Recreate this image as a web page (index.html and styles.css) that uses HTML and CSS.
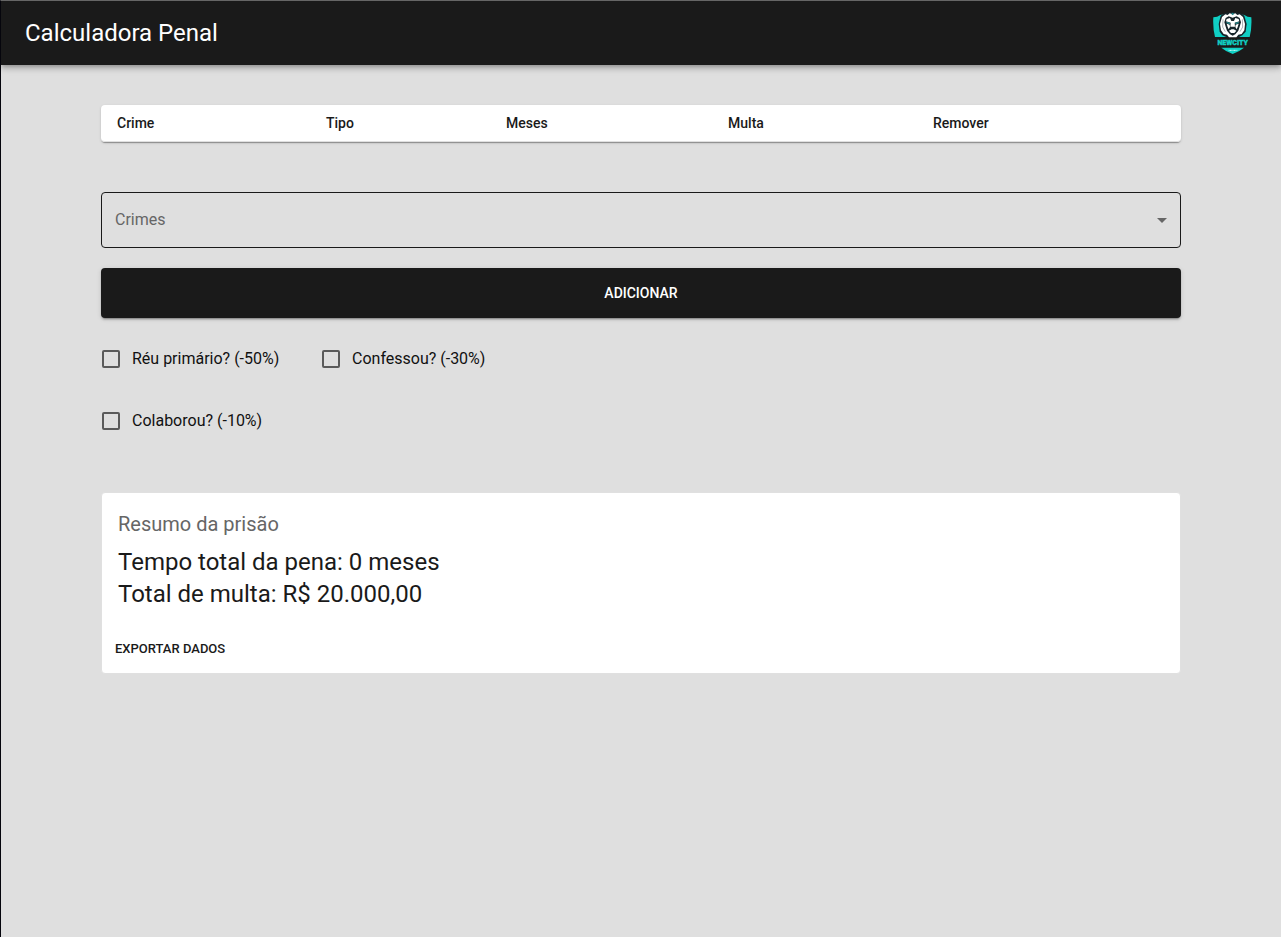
FILE: index.html
```html
<!DOCTYPE html>
<html lang="pt-BR">
<head>
<meta charset="utf-8">
<meta name="viewport" content="width=device-width, initial-scale=1">
<title>Calculadora Penal</title>
<link rel="stylesheet" href="styles.css">
</head>
<body>
<header class="app-bar">
  <h1 class="app-title">Calculadora Penal</h1>
  <svg class="logo" viewBox="0 0 120 126" role="img" aria-label="NewCity">
    <path fill="#10cfc4" d="M1 16Q13 16 22 9L59 2L94 9Q103 16 115 16Q117 48 110 75H6Q-1 48 1 16Z"/>
    <path fill="#10cfc4" d="M25 107H93Q80 118 59 126Q38 118 25 107Z"/>
    <path fill="#17242a" d="M23 11L36 3L59 0L82 3L94 11L101 36L98 59L88 70L78 75H40L28 70L20 59L17 36Z"/>
    <path fill="#fff" d="M27 15L37 7L44 9L50 4L59 7L67 4L73 9L80 7L90 15L96 36L94 55L86 66L76 68L70 76H48L42 68L32 66L24 55L21 36Z"/>
    <path fill="#17242a" d="M38 18L47 13L59 17L71 13L80 18L84 31L80 44L76 56L67 67L59 71L51 67L42 56L38 44L34 31Z"/>
    <path fill="#fff" d="M41 21L51 18L55 27H63L67 18L77 21L79 28L65 32L66 44H52L53 32L39 28ZM41 35L50 38L51 45L47 52L44 45ZM77 35L68 38L67 45L71 52L74 45ZM48 56L56 52H62L70 56L64 63H54Z"/>
    <path fill="#27868b" d="M40 29L52 32L50 37L41 34ZM78 29L66 32L68 37L77 34ZM54 5L59 2L64 5L59 10Z"/>
    <path fill="none" stroke="#7f898f" stroke-width="2" d="M30 22L29 45L37 59M88 22L89 45L81 59"/>
    <text class="logo-name" x="59" y="99" text-anchor="middle">NEWCITY</text>
    <path stroke="#d5fffb" stroke-width="3" stroke-dasharray="3 1" d="M47 115H73"/>
  </svg>
</header>

<main class="content">
  <table class="crime-table">
    <colgroup>
      <col class="col-crime"><col class="col-type"><col class="col-months"><col class="col-fine"><col class="col-remove">
    </colgroup>
    <thead>
      <tr>
        <th scope="col">Crime</th>
        <th scope="col">Tipo</th>
        <th scope="col">Meses</th>
        <th scope="col">Multa</th>
        <th scope="col">Remover</th>
      </tr>
    </thead>
  </table>

  <div class="crime-field">
    <select class="crime-select" aria-label="Crimes">
      <option value="">Crimes</option>
    </select>
    <svg class="crime-arrow" viewBox="0 0 24 24" aria-hidden="true"><path d="M7 10l5 5 5-5z"/></svg>
  </div>

  <button class="add-button" type="button">ADICIONAR</button>

  <div class="options">
    <label class="option"><input class="option-box" type="checkbox">Réu primário? (-50%)</label>
    <label class="option"><input class="option-box" type="checkbox">Confessou? (-30%)</label>
    <label class="option"><input class="option-box" type="checkbox">Colaborou? (-10%)</label>
  </div>

  <section class="summary">
    <div class="summary-body">
      <h2 class="summary-title">Resumo da prisão</h2>
      <p class="summary-line">Tempo total da pena: 0 meses</p>
      <p class="summary-line">Total de multa: R$ 20.000,00</p>
    </div>
    <div class="summary-actions">
      <button class="export-button" type="button">EXPORTAR DADOS</button>
    </div>
  </section>
</main>
</body>
</html>
```
FILE: styles.css
```css
* {
  box-sizing: border-box;
}

body {
  margin: 0;
  min-height: 100vh;
  border-top: 1px solid #666;
  border-left: 1px solid #05050c;
  background: #dfdfdf;
  color: #1a1a1a;
  font-family: Roboto, "Liberation Sans", sans-serif;
  font-size: 16px;
  line-height: 24px;
}

.app-bar {
  display: flex;
  align-items: center;
  justify-content: space-between;
  min-height: 64px;
  padding: 0 28px 0 24px;
  background: #1a1a1a;
  color: #fff;
  box-shadow: 0 2px 4px -1px rgba(0, 0, 0, 0.2), 0 4px 5px rgba(0, 0, 0, 0.14), 0 1px 10px rgba(0, 0, 0, 0.12);
}

.app-title {
  margin: 0;
  font-size: 24px;
  font-weight: 400;
  line-height: 32px;
}

.logo {
  width: 40px;
  height: 42px;
}

.logo-name {
  fill: #10cfc4;
  stroke: #10cfc4;
  stroke-width: 1;
  font-family: Roboto, sans-serif;
  font-size: 21px;
  font-weight: 900;
}

.content {
  display: flex;
  flex-direction: column;
  padding: 40px 100px;
}

.crime-table {
  width: 100%;
  margin-bottom: 50px;
  table-layout: fixed;
  border-spacing: 0;
  border-radius: 4px;
  background: #fff;
  box-shadow: 0 2px 1px -1px rgba(0, 0, 0, 0.2), 0 1px 1px rgba(0, 0, 0, 0.14), 0 1px 3px rgba(0, 0, 0, 0.12);
}

.crime-table th {
  padding: 6px 16px;
  border-bottom: 1px solid #e0e0e0;
  font-size: 14px;
  font-weight: 500;
  text-align: left;
}

.crime-table th:first-child {
  border-bottom-left-radius: 4px;
}

.crime-table th:last-child {
  border-bottom-right-radius: 4px;
}

.col-crime {
  width: 19.35%;
}

.col-type {
  width: 16.67%;
}

.col-months {
  width: 20.56%;
}

.col-fine {
  width: 18.98%;
}

.col-remove {
  width: 24.44%;
}

.crime-field {
  display: grid;
  align-items: center;
  margin-bottom: 20px;
}

.crime-select {
  grid-area: 1 / 1;
  width: 100%;
  height: 56px;
  padding: 0 40px 0 13px;
  border: 1px solid #1a1a1a;
  border-radius: 4px;
  appearance: none;
  background: transparent;
  color: #666;
  font: inherit;
}

.crime-arrow {
  grid-area: 1 / 1;
  justify-self: end;
  width: 24px;
  height: 24px;
  margin-right: 7px;
  fill: #666;
  pointer-events: none;
}

.add-button {
  height: 50px;
  border: 0;
  border-radius: 4px;
  background: #1a1a1a;
  color: #fff;
  font: inherit;
  font-size: 14px;
  font-weight: 500;
  box-shadow: 0 3px 1px -2px rgba(0, 0, 0, 0.2), 0 2px 2px rgba(0, 0, 0, 0.14), 0 1px 5px rgba(0, 0, 0, 0.12);
}

.options {
  display: grid;
  grid-template-columns: repeat(2, 220px);
  gap: 20px 0;
  margin: 20px 0 50px;
}

.option {
  display: flex;
  align-items: center;
  gap: 12px;
  min-height: 42px;
  padding-left: 1px;
  color: #111;
}

.option-box {
  width: 18px;
  height: 18px;
  margin: 0;
  border: 2px solid #5a5a5a;
  border-radius: 2px;
  appearance: none;
}

.option-box:checked {
  background: #5a5a5a;
}

.summary {
  border: 1px solid #e0e0e0;
  border-radius: 4px;
  background: #fff;
}

.summary-body {
  padding: 16px;
}

.summary-title {
  margin: 0 0 7px;
  color: #666;
  font-size: 20px;
  font-weight: 400;
  line-height: 30px;
}

.summary-line {
  margin: 0;
  font-size: 24px;
  line-height: 32px;
}

.summary-actions {
  padding: 8px;
}

.export-button {
  display: block;
  padding: 4px 5px 5px;
  border: 0;
  background: transparent;
  color: #1a1a1a;
  font: inherit;
  font-size: 13px;
  font-weight: 500;
  line-height: 22px;
}
```
